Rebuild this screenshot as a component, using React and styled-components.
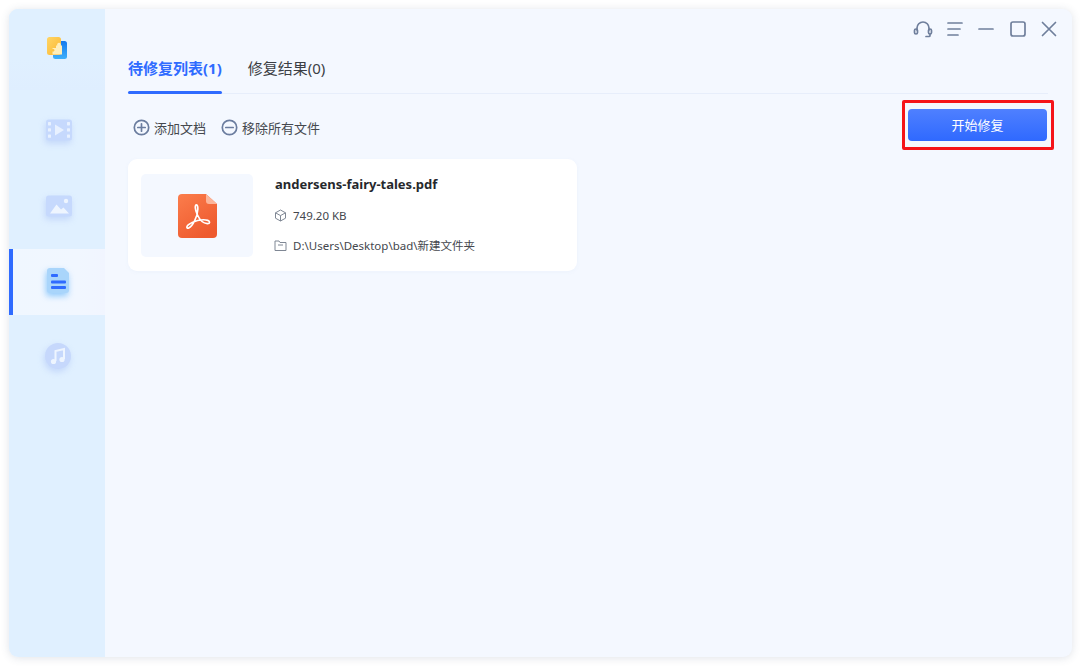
import React from "react";
import styled, { createGlobalStyle } from "styled-components";

const GlobalStyle = createGlobalStyle`
    html, body {
        margin: 0;
        padding: 0;
        background: #fff;
    }
    body {
        font-family: "Noto Sans", "Noto Sans CJK SC", sans-serif;
    }
`;

const Page = styled.div`
    width: 1080px;
    height: 666px;
    padding: 9px 8px 9px 9px;
    box-sizing: border-box;
    overflow: hidden;
`;

const Window = styled.div`
    display: flex;
    height: 100%;
    border-radius: 9px;
    overflow: hidden;
    background: #f4f8ff;
    box-shadow: 0 1px 8px rgba(60, 80, 110, 0.16);
`;

const Sidebar = styled.div`
    width: 96px;
    flex-shrink: 0;
    display: flex;
    flex-direction: column;
    background: #e0f0ff;
`;

const LogoRow = styled.div`
    height: 81px;
    display: flex;
    justify-content: center;
    padding-top: 25px;
    box-sizing: border-box;
    background: linear-gradient(180deg, #e0f0ff 60%, #dfeeff 100%);
    margin-bottom: 7px;
`;

const NavItem = styled.div`
    height: 66px;
    margin-bottom: 10px;
    display: flex;
    align-items: center;
    justify-content: center;
    box-sizing: border-box;
    border-left: 4px solid ${(p) => (p.$active ? "#2f6bff" : "transparent")};
    background: ${(p) => (p.$active ? "linear-gradient(90deg, #f0f7ff 0%, #f1f7ff 70%, #f1f5ff 100%)" : "transparent")};
    &:last-child {
        height: 62px;
    }
`;

const NavIcon = styled.svg`
    width: 30px;
    height: 30px;
    filter: blur(0.4px) drop-shadow(-1px 3px 3px ${(p) => p.$glow || "rgba(130, 160, 240, 0.3)"});
`;

const Main = styled.div`
    flex: 1;
    min-width: 0;
    padding: 0 24px 0 23px;
    display: flex;
    flex-direction: column;
`;

const TitleBar = styled.div`
    height: 37px;
    display: flex;
    justify-content: flex-end;
    align-items: flex-start;
    gap: 11.5px;
    padding-top: 10px;
    box-sizing: border-box;
    margin-right: -11px;
`;

const TitleIcon = styled.svg`
    width: 20px;
    height: 20px;
    fill: none;
    stroke: #6f7f9c;
    stroke-width: 1.7;
    stroke-linecap: round;
    stroke-linejoin: round;
`;

const Tabs = styled.div`
    height: 47px;
    display: flex;
    gap: 26px;
    border-bottom: 1px solid #e7eefb;
`;

const Tab = styled.div`
    position: relative;
    height: 47px;
    padding-top: 11px;
    box-sizing: border-box;
    font-size: 15px;
    line-height: 22px;
    font-weight: ${(p) => (p.$active ? 700 : 400)};
    color: ${(p) => (p.$active ? "#2f6bff" : "#3c3f45")};
    white-space: nowrap;
    &::after {
        content: "";
        display: ${(p) => (p.$active ? "block" : "none")};
        position: absolute;
        left: 0;
        right: 0;
        bottom: -1px;
        height: 3px;
        border-radius: 2px;
        background: #2f6bff;
    }
`;

const Toolbar = styled.div`
    display: flex;
    align-items: center;
    justify-content: space-between;
    margin-top: 6px;
`;

const Actions = styled.div`
    display: flex;
    align-items: center;
    gap: 15px;
    padding: 5px 0 0 5px;
`;

const Action = styled.div`
    display: flex;
    align-items: center;
    gap: 4px;
    font-size: 13px;
    color: #45484e;
`;

const ActionIcon = styled.svg`
    width: 17px;
    height: 17px;
    fill: none;
    stroke: #6b7d9f;
    stroke-width: 1.7;
    stroke-linecap: round;
`;

const Highlight = styled.div`
    border: 3px solid #f5141a;
    border-radius: 2px;
    padding: 6px 4px 6px 3px;
    margin-right: -6px;
`;

const StartButton = styled.div`
    width: 139px;
    height: 32px;
    border-radius: 4px;
    background: linear-gradient(180deg, #4f80ff 0%, #2f69ff 100%);
    color: #fff;
    font-size: 13px;
    line-height: 33px;
    text-align: center;
`;

const FileCard = styled.div`
    width: 449px;
    height: 112px;
    margin-top: 9px;
    box-sizing: border-box;
    padding: 15px 13px 14px;
    display: flex;
    gap: 21px;
    background: #fff;
    border-radius: 9px;
    box-shadow: 0 1px 4px rgba(120, 150, 200, 0.06);
`;

const Thumb = styled.div`
    width: 112px;
    height: 83px;
    flex-shrink: 0;
    display: flex;
    align-items: center;
    justify-content: center;
    background: #f4f8ff;
    border-radius: 5px;
`;

const Info = styled.div`
    display: flex;
    flex-direction: column;
    min-width: 0;
`;

const FileName = styled.div`
    flex-shrink: 0;
    font-size: 13px;
    line-height: 20px;
    font-weight: 700;
    color: #26282c;
    margin: 0 0 11px 1px;
`;

const Meta = styled.div`
    flex-shrink: 0;
    display: flex;
    align-items: center;
    gap: 6px;
    height: 20px;
    margin-bottom: 10px;
    font-size: 11.5px;
    color: #44474d;
    white-space: nowrap;
`;

const MetaIcon = styled.svg`
    width: 13px;
    height: 13px;
    flex-shrink: 0;
    fill: none;
    stroke: #7f8794;
    stroke-width: 1;
    stroke-linejoin: round;
`;

export default function App() {
    return (
        <Page>
            <GlobalStyle />
            <Window>
                <Sidebar>
                    <LogoRow>
                        <svg width="24" height="26" viewBox="0 0 24 26">
                            <defs>
                                <linearGradient id="logoY" x1="0" y1="0" x2="1" y2="1">
                                    <stop offset="0" stopColor="#ffd566" />
                                    <stop offset="1" stopColor="#fbb62f" />
                                </linearGradient>
                                <linearGradient id="logoB" x1="0" y1="0" x2="0" y2="1">
                                    <stop offset="0" stopColor="#1479ee" />
                                    <stop offset="1" stopColor="#3fb0fb" />
                                </linearGradient>
                            </defs>
                            <rect x="8" y="7" width="14" height="18" rx="2.5" fill="url(#logoB)" />
                            <rect x="2" y="3" width="14" height="18" rx="2.5" fill="url(#logoY)" />
                            <path
                                d="M11 11.500h1.300a1.900 1.900 0 1 1 3.400 0h1.300v9h-9.500v-3h1.200a1.400 1.400 0 0 0 0-2.500h-1.200v-1h3.500z"
                                fill="#ffeebb"
                            />
                        </svg>
                    </LogoRow>
                    <NavItem>
                        <NavIcon viewBox="0 0 30 30">
                            <rect x="2" y="4.500" width="26" height="21" rx="2.500" fill="#c6d9fd" />
                            <g fill="#e8f1ff">
                                <rect x="4" y="7" width="3" height="3.400" rx="0.600" />
                                <rect x="4" y="13.200" width="3" height="3.400" rx="0.600" />
                                <rect x="4" y="19.400" width="3" height="3.400" rx="0.600" />
                                <rect x="23" y="7" width="3" height="3.400" rx="0.600" />
                                <rect x="23" y="13.200" width="3" height="3.400" rx="0.600" />
                                <rect x="23" y="19.400" width="3" height="3.400" rx="0.600" />
                                <path d="M11 9.500l9 5.500-9 5.500z" />
                            </g>
                        </NavIcon>
                    </NavItem>
                    <NavItem>
                        <NavIcon viewBox="0 0 30 30">
                            <rect x="2" y="4.500" width="26" height="21" rx="2.500" fill="#c6d9fd" />
                            <circle cx="22" cy="10" r="2.200" fill="#eef5ff" />
                            <path d="M6 22.500l6.500-9 4.500 5 2.500-2 5.500 6z" fill="#eef5ff" />
                        </NavIcon>
                    </NavItem>
                    <NavItem $active>
                        <NavIcon viewBox="0 0 30 30" $glow="rgba(120, 190, 250, 0.8)">
                            <path d="M3 4a3 3 0 0 1 3-3h14l5 5v17a3 3 0 0 1-3 3H6a3 3 0 0 1-3-3z" fill="#a9d5fb" />
                            <rect x="7" y="7" width="7" height="3" rx="1" fill="#2f6bff" />
                            <rect x="7" y="13.500" width="15" height="3" rx="1" fill="#2f6bff" />
                            <rect x="7" y="19" width="15" height="3" rx="1" fill="#2f6bff" />
                        </NavIcon>
                    </NavItem>
                    <NavItem>
                        <NavIcon viewBox="0 0 30 30">
                            <circle cx="14" cy="15" r="13" fill="#c6d8fc" />
                            <path d="M11.500 20V10l8.500-2v10" fill="none" stroke="#eef5ff" strokeWidth="2" />
                            <circle cx="9.500" cy="20.500" r="2.600" fill="#eef5ff" />
                            <circle cx="18" cy="18.500" r="2.600" fill="#eef5ff" />
                        </NavIcon>
                    </NavItem>
                </Sidebar>
                <Main>
                    <TitleBar>
                        <TitleIcon viewBox="0 0 20 20">
                            <path d="M4 11V9a6 6 0 0 1 12 0v2" />
                            <rect x="1.500" y="10" width="3" height="5" rx="1.500" />
                            <rect x="15.500" y="10" width="3" height="5" rx="1.500" />
                            <path d="M17 15v1.500a1 1 0 0 1-1 1h-3" />
                        </TitleIcon>
                        <TitleIcon viewBox="0 0 20 20">
                            <path d="M3 4h14M3 10h12M3 16h10" />
                        </TitleIcon>
                        <TitleIcon viewBox="0 0 20 20">
                            <path d="M3 10h14" />
                        </TitleIcon>
                        <TitleIcon viewBox="0 0 20 20">
                            <rect x="3" y="3" width="14" height="14" rx="2" />
                        </TitleIcon>
                        <TitleIcon viewBox="0 0 20 20">
                            <path d="M3.500 3.500l13 13M16.500 3.500l-13 13" />
                        </TitleIcon>
                    </TitleBar>
                    <Tabs>
                        <Tab $active>待修复列表(1)</Tab>
                        <Tab>修复结果(0)</Tab>
                    </Tabs>
                    <Toolbar>
                        <Actions>
                            <Action>
                                <ActionIcon viewBox="0 0 17 17">
                                    <circle cx="8.500" cy="8.500" r="7.200" />
                                    <path d="M8.500 4.800v7.400M4.800 8.500h7.400" />
                                </ActionIcon>
                                添加文档
                            </Action>
                            <Action>
                                <ActionIcon viewBox="0 0 17 17">
                                    <circle cx="8.500" cy="8.500" r="7.200" />
                                    <path d="M4.800 8.500h7.400" />
                                </ActionIcon>
                                移除所有文件
                            </Action>
                        </Actions>
                        <Highlight>
                            <StartButton>开始修复</StartButton>
                        </Highlight>
                    </Toolbar>
                    <FileCard>
                        <Thumb>
                            <svg width="39" height="44" viewBox="0 0 39 44">
                                <defs>
                                    <linearGradient id="pdfBg" x1="0" y1="0" x2="0.6" y2="1">
                                        <stop offset="0" stopColor="#fb7d4c" />
                                        <stop offset="1" stopColor="#ee5a2e" />
                                    </linearGradient>
                                </defs>
                                <path d="M4 0h24l11 10v30a4 4 0 0 1-4 4H4a4 4 0 0 1-4-4V4a4 4 0 0 1 4-4z" fill="url(#pdfBg)" />
                                <path d="M28 0l11 10h-8a3 3 0 0 1-3-3z" fill="#fcb59a" />
                                <path
                                    transform="translate(-3.700 -4.700) scale(1.200)"
                                    d="M18.500 13c-1.600 0-1.200 4 .6 8 1.700 3.800 5 7.400 8.400 7.600 2.400.1 2.500-2 .4-2.700-4.500-1.500-12.600.5-16.300 3.800-1.900 1.700-1.200 3.200.4 2.500 3.300-1.500 7.500-9.700 7.600-15.600.1-2-.3-3.600-1.100-3.600z"
                                    fill="none"
                                    stroke="#fff"
                                    strokeWidth="1.400"
                                    strokeLinejoin="round"
                                />
                            </svg>
                        </Thumb>
                        <Info>
                            <FileName>andersens-fairy-tales.pdf</FileName>
                            <Meta>
                                <MetaIcon viewBox="0 0 13 13">
                                    <path d="M6.500 1l5 2.800v5.400l-5 2.800-5-2.800V3.800z" />
                                    <path d="M1.500 3.800l5 2.800 5-2.800M6.500 6.600V12" />
                                </MetaIcon>
                                749.20 KB
                            </Meta>
                            <Meta>
                                <MetaIcon viewBox="0 0 13 13">
                                    <path d="M1 2h4l1 1.500h6V11.500H1z" />
                                    <path d="M4 6h5" />
                                </MetaIcon>
                                D:\Users\Desktop\bad\新建文件夹
                            </Meta>
                        </Info>
                    </FileCard>
                </Main>
            </Window>
        </Page>
    );
}
